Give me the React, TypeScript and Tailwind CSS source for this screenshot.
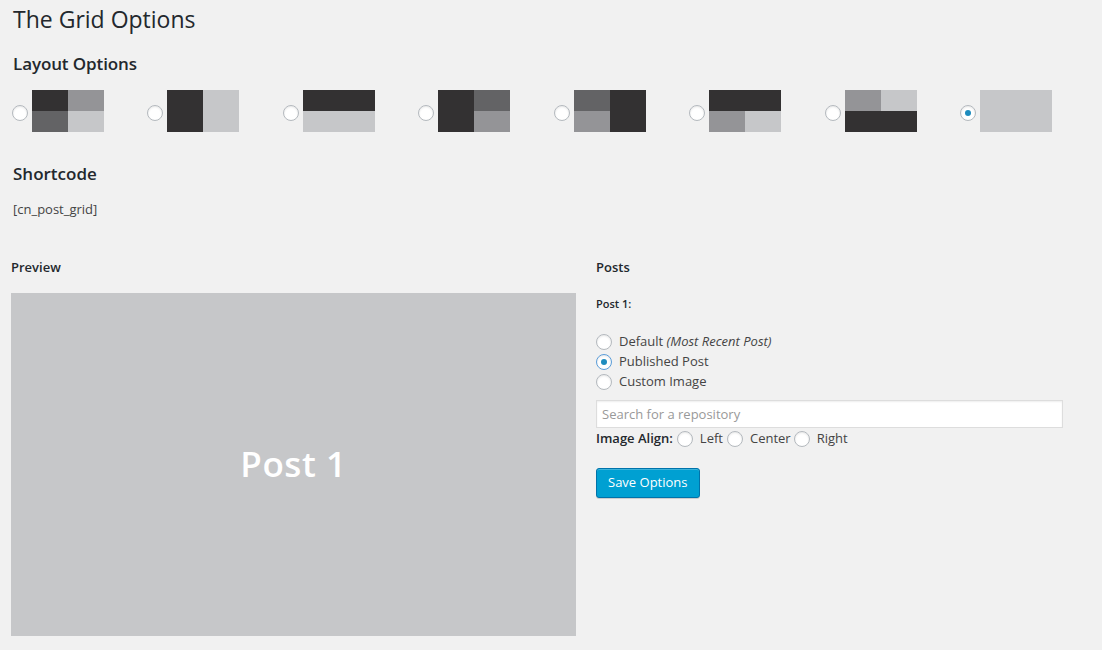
import React from "react";

const D = "bg-[#333132]";
const M = "bg-[#636365]";
const G = "bg-[#949497]";
const L = "bg-[#c6c7c9]";

function Radio({ checked = false, focus = false }: { checked?: boolean; focus?: boolean }) {
  return (
    <span
      className={`inline-flex h-4 w-4 shrink-0 items-center justify-center rounded-full border bg-white shadow-[inset_0_1px_2px_rgba(0,0,0,0.1)] ${
        focus ? "border-[#5b9dd9] shadow-[0_0_2px_rgba(30,140,190,0.8)]" : "border-[#b4b9be]"
      }`}
    >
      {checked && <span className="h-[6px] w-[6px] rounded-full bg-[#1e8cbe]" />}
    </span>
  );
}

function Thumb({ n }: { n: number }) {
  const base = "flex h-[42px] w-[72px]";
  switch (n) {
    case 0:
      return (
        <div className="grid h-[42px] w-[72px] grid-cols-2 grid-rows-2">
          <div className={D} />
          <div className={G} />
          <div className={M} />
          <div className={L} />
        </div>
      );
    case 1:
      return (
        <div className={base}>
          <div className={`flex-1 ${D}`} />
          <div className={`flex-1 ${L}`} />
        </div>
      );
    case 2:
      return (
        <div className={`${base} flex-col`}>
          <div className={`flex-1 ${D}`} />
          <div className={`flex-1 ${L}`} />
        </div>
      );
    case 3:
      return (
        <div className={base}>
          <div className={`flex-1 ${D}`} />
          <div className="flex flex-1 flex-col">
            <div className={`flex-1 ${M}`} />
            <div className={`flex-1 ${G}`} />
          </div>
        </div>
      );
    case 4:
      return (
        <div className={base}>
          <div className="flex flex-1 flex-col">
            <div className={`flex-1 ${M}`} />
            <div className={`flex-1 ${G}`} />
          </div>
          <div className={`flex-1 ${D}`} />
        </div>
      );
    case 5:
      return (
        <div className={`${base} flex-col`}>
          <div className={`flex-1 ${D}`} />
          <div className="flex flex-1">
            <div className={`flex-1 ${G}`} />
            <div className={`flex-1 ${L}`} />
          </div>
        </div>
      );
    case 6:
      return (
        <div className={`${base} flex-col`}>
          <div className="flex flex-1">
            <div className={`flex-1 ${G}`} />
            <div className={`flex-1 ${L}`} />
          </div>
          <div className={`flex-1 ${D}`} />
        </div>
      );
    default:
      return <div className={`h-[42px] w-[72px] ${L}`} />;
  }
}

export default function App() {
  return (
    <div className="min-h-[650px] bg-[#f1f1f1] font-['Open_Sans',sans-serif] text-[13px] text-[#444]">
      <div className="pl-[13px]">
        <h1 className="pt-[5px] text-[23px] leading-[29px] font-normal text-[#23282d]">The Grid Options</h1>
        <h2 className="mt-[20px] text-[17px] leading-[20px] font-semibold tracking-[-0.1px] text-[#23282d]">Layout Options</h2>
      </div>
      <div className="mt-[16px] flex pl-[12px]">
        {[0, 1, 2, 3, 4, 5, 6, 7].map((i) => (
          <div key={i} className="flex w-[135.43px] shrink-0 items-center gap-[4px]">
            <span className="mt-[3px] flex">
              <Radio checked={i === 7} />
            </span>
            <Thumb n={i} />
          </div>
        ))}
      </div>
      <div className="pl-[13px]">
        <h2 className="mt-[32px] text-[17px] leading-[20px] font-semibold text-[#23282d]">Shortcode</h2>
        <p className="mt-[15px] leading-[20px] text-[#444]">[cn_post_grid]</p>
      </div>
      <div className="mt-[38px] flex gap-[20px] pl-[11px]">
        <div className="w-[565px] shrink-0">
          <h3 className="leading-[20px] font-semibold text-[#23282d]">Preview</h3>
          <div className="mt-[16px] flex h-[343px] items-center justify-center bg-[#c6c7c9]">
            <span className="text-[35px] font-semibold tracking-[0.6px] text-white">Post 1</span>
          </div>
        </div>
        <div className="w-[467px] shrink-0">
          <h3 className="leading-[20px] font-semibold text-[#23282d]">Posts</h3>
          <p className="mt-[19px] text-[11px] leading-[16px] font-semibold text-[#23282d]">Post 1:</p>
          <div className="mt-[20px] flex flex-col">
            <label className="flex h-[20px] items-center gap-[7px]">
              <Radio />
              <span>
                Default <em>(Most Recent Post)</em>
              </span>
            </label>
            <label className="flex h-[20px] items-center gap-[7px]">
              <Radio checked focus />
              <span>Published Post</span>
            </label>
            <label className="flex h-[20px] items-center gap-[7px]">
              <Radio />
              <span>Custom Image</span>
            </label>
          </div>
          <input
            className="mt-[8px] block h-[28px] w-[467px] border border-[#ddd] bg-white px-[5px] text-[13px] text-[#32373c] shadow-[inset_0_1px_2px_rgba(0,0,0,0.07)] outline-none placeholder:text-[#999]"
            placeholder="Search for a repository"
          />
          <div className="flex h-[22px] items-center">
            <span className="font-semibold text-[#23282d]">Image Align:</span>
            <span className="ml-[4px] flex items-center">
              <Radio />
            </span>
            <span className="ml-[7px]">Left</span>
            <span className="ml-[4px] flex items-center">
              <Radio />
            </span>
            <span className="ml-[7px]">Center</span>
            <span className="ml-[3px] flex items-center">
              <Radio />
            </span>
            <span className="ml-[7px]">Right</span>
          </div>
          <button className="mt-[18px] h-[30px] rounded-[3px] border border-[#0073aa] bg-[#00a0d2] px-[11px] pb-[2px] text-[13px] leading-[26px] text-white shadow-[inset_0_1px_0_rgba(120,200,230,0.5),0_1px_0_rgba(0,0,0,0.15)]">
            Save Options
          </button>
        </div>
      </div>
    </div>
  );
}
